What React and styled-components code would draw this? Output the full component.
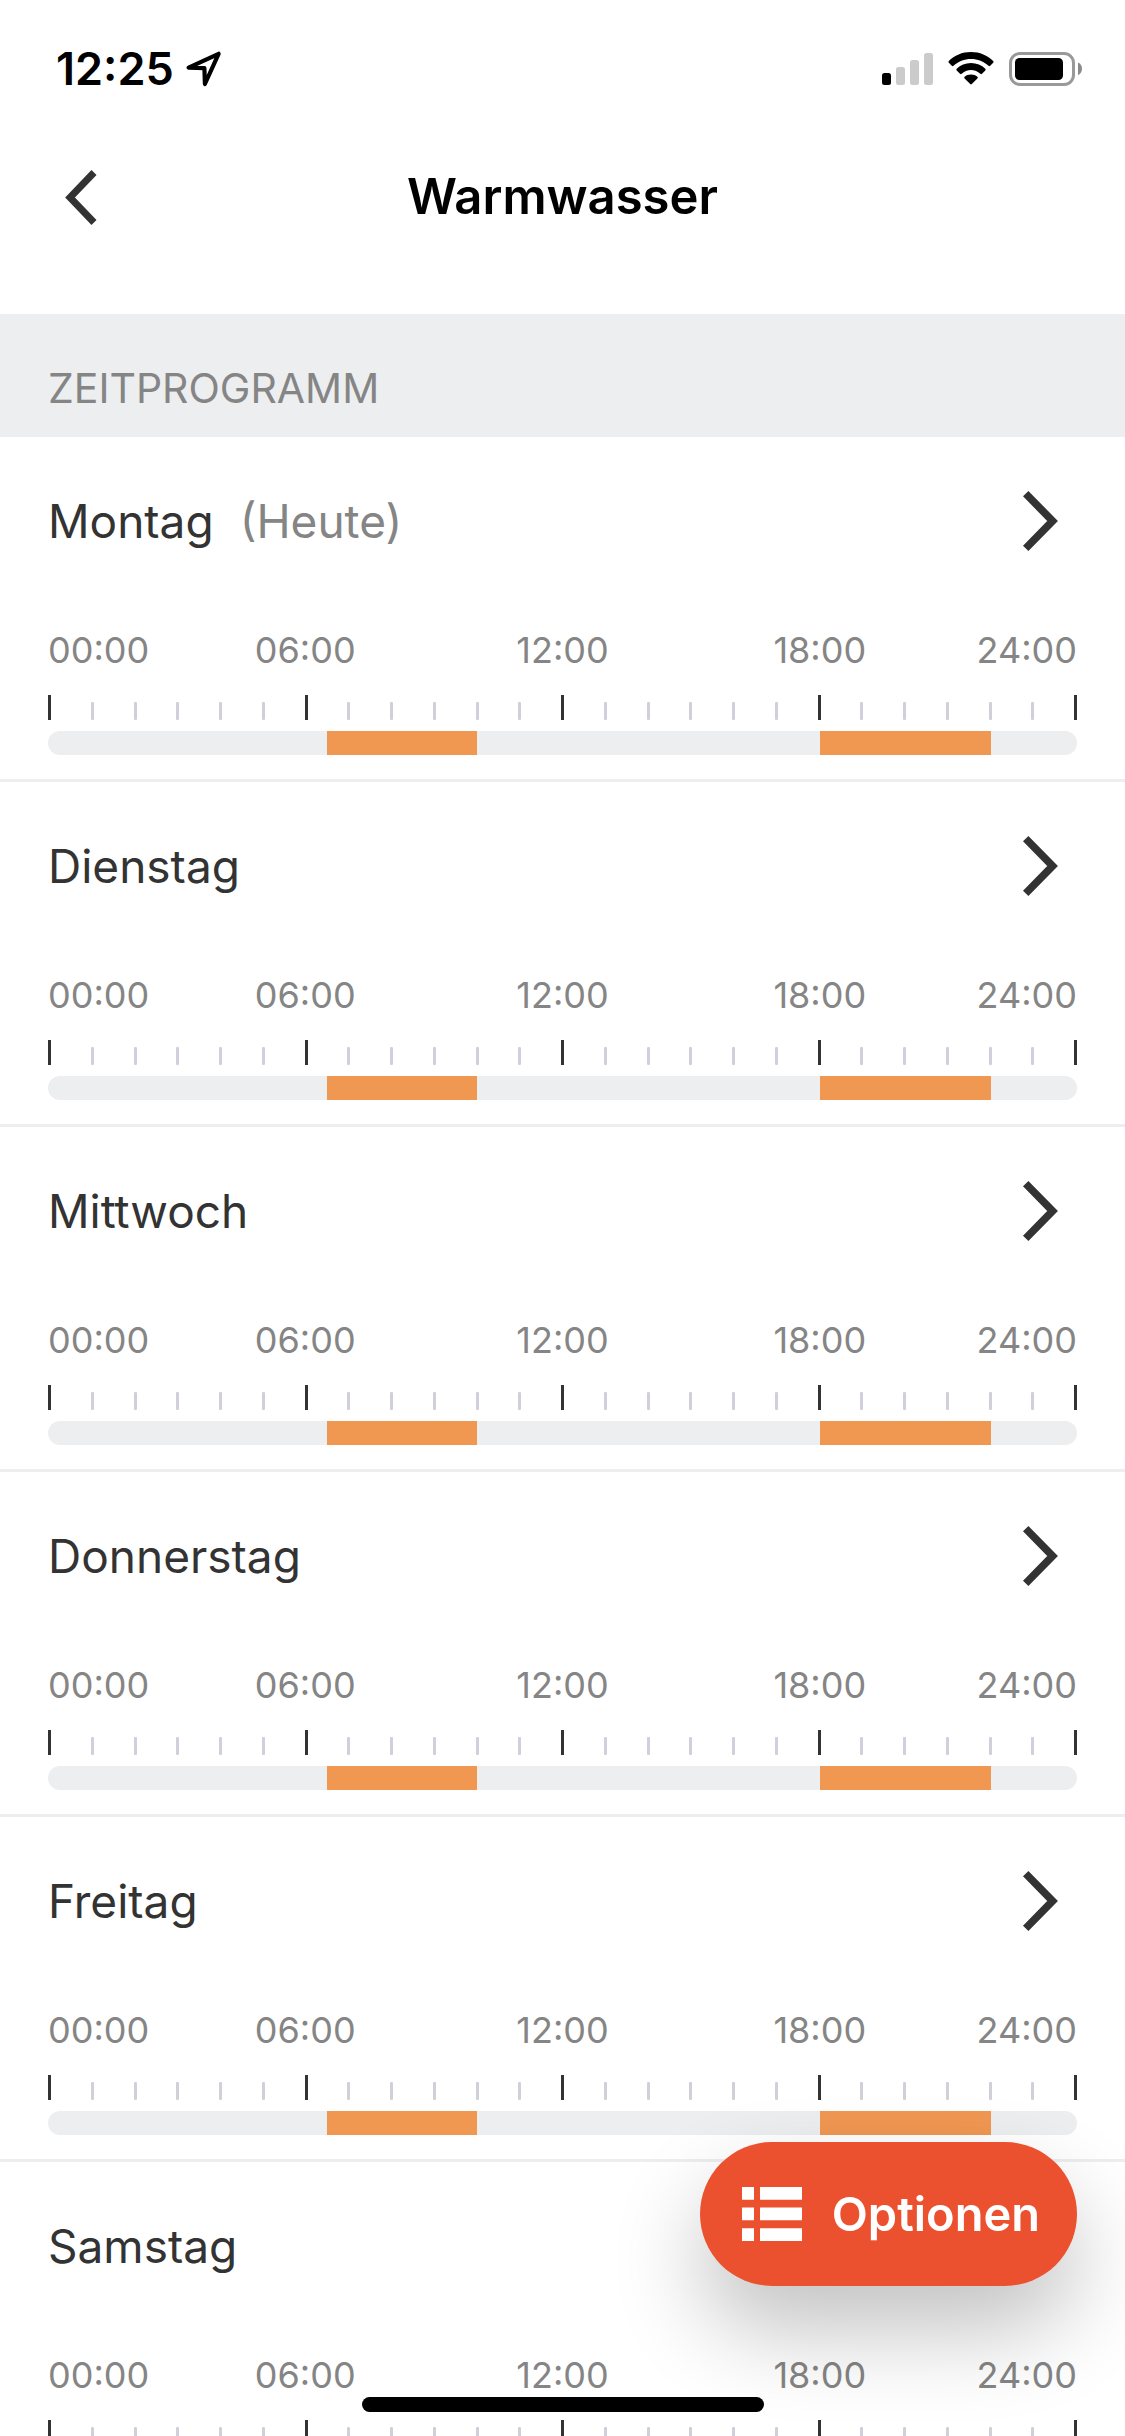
import React, { memo } from 'react';
import styled, { createGlobalStyle } from 'styled-components';

const GlobalStyle = createGlobalStyle`
    * {
        box-sizing: border-box;
    }

    body {
        margin: 0;
        background: #fff;
        color: #333;
        font-family: Inter, "Liberation Sans", sans-serif;
    }

    button {
        font-family: inherit;
        border: 0;
        cursor: pointer;
    }

    svg {
        display: block;
        flex: none;
    }
`;

const Screen = styled.div`
    height: 100vh;
    display: flex;
    flex-direction: column;
    overflow: hidden;
`;

const StatusBar = styled.div`
    flex: none;
    height: 132px;
    padding: 5px 43px 0 56px;
    display: flex;
    align-items: center;
    justify-content: space-between;
    color: #000;
`;

const StatusGroup = styled.div`
    display: flex;
    align-items: center;
    gap: ${(props) => props.$gap}px;
`;

const Clock = styled.span`
    font-size: 45px;
    font-weight: 600;
    line-height: 60px;
`;

const NavBar = styled.header`
    flex: none;
    height: 130px;
    margin-bottom: 52px;
    padding: 0 48px;
    display: grid;
    grid-template-columns: 96px 1fr 96px;
    align-items: center;
`;

const BackButton = styled.button`
    height: 96px;
    padding: 0 17px;
    background: none;
    display: flex;
    align-items: center;
`;

const Title = styled.h1`
    margin: 0;
    color: #000;
    font-size: 49px;
    font-weight: 600;
    line-height: 60px;
    text-align: center;
`;

const Content = styled.main`
    flex: 1;
    min-height: 0;
    overflow-y: auto;
    scrollbar-width: none;
`;

const SectionTitle = styled.h2`
    height: 123px;
    margin: 0;
    padding: 24px 48px 0;
    display: flex;
    align-items: center;
    background: #edeef0;
    color: #858585;
    font-size: 41px;
    font-weight: 400;
`;

const DayList = styled.ul`
    list-style: none;
    margin: 0;
    padding: 0;
`;

const DayItem = styled.li`
    padding-bottom: 24px;
    border-bottom: 3px solid #edeef0;
`;

const DayButton = styled.button`
    width: 100%;
    height: 168px;
    padding: 0 67px 0 48px;
    display: flex;
    align-items: center;
    gap: 26px;
    background: none;
    color: #333;
    font-size: 46px;
    line-height: 56px;

    svg {
        margin-left: auto;
    }
`;

const Today = styled.span`
    color: #858585;
`;

const Schedule = styled.div`
    padding: 0 48px;
`;

/* Randbeschriftungen sind halb so breit, so sitzt jede Uhrzeit mittig über ihrem Strich */
const Hours = styled.div`
    display: grid;
    grid-template-columns: 1fr 2fr 2fr 2fr 1fr;
    color: #858585;
    font-size: 36px;
    line-height: 90px;
    text-align: center;

    span:first-child {
        text-align: left;
    }

    span:last-child {
        text-align: right;
    }
`;

const Ticks = styled.div`
    height: 25px;
    margin-bottom: 11px;
    display: flex;
    align-items: flex-end;
    justify-content: space-between;
`;

const Tick = styled.span`
    width: 3px;
    height: ${(props) => (props.$major ? 25 : 18)}px;
    border-radius: ${(props) => (props.$major ? 0 : 1)}px;
    background: ${(props) => (props.$major ? '#333' : '#d1d0da')};
`;

const Bar = styled.div`
    height: 24px;
    display: flex;
    overflow: hidden;
    border-radius: 12px;
    background: #edeef0;
`;

const Segment = styled.span`
    flex: 0 0 auto;
    background: ${(props) => (props.$active ? '#f09752' : 'transparent')};
`;

const OptionsButton = styled.button`
    position: fixed;
    right: 48px;
    bottom: 150px;
    height: 144px;
    padding: 0 37px 0 42px;
    display: flex;
    align-items: center;
    gap: 30px;
    border-radius: 72px;
    background: #ec512f;
    box-shadow: 0 45px 90px rgba(0, 0, 0, 0.24);
    color: #fff;
    font-size: 47px;
    font-weight: 600;
    line-height: 56px;
`;

const HomeIndicator = styled.div`
    position: fixed;
    left: 50%;
    bottom: 24px;
    width: 402px;
    height: 15px;
    transform: translateX(-50%);
    border-radius: 8px;
    background: #000;
`;

const HOURS = ['00:00', '06:00', '12:00', '18:00', '24:00'];

const HEATING = [
    { from: 6.5, to: 10 },
    { from: 18, to: 22 },
];

const DAYS = [
    { name: 'Montag', today: true, slots: HEATING },
    { name: 'Dienstag', slots: HEATING },
    { name: 'Mittwoch', slots: HEATING },
    { name: 'Donnerstag', slots: HEATING },
    { name: 'Freitag', slots: HEATING },
    { name: 'Samstag', slots: HEATING },
];

// Zeitfenster in aufeinanderfolgende Abschnitte (Pause / aktiv) zerlegen
const toSegments = (slots) => {
    const segments = [];
    let hour = 0;
    slots.forEach(({ from, to }) => {
        segments.push({ hours: from - hour, active: false });
        segments.push({ hours: to - from, active: true });
        hour = to;
    });
    return segments;
};

const LocationIcon = () => (
    <svg width="36" height="36" viewBox="0 0 36 36" fill="none" stroke="currentColor" strokeWidth="4.2" strokeLinejoin="round">
        <path d="M2.6 16.6 L32.6 2.8 L18.9 33 L18.4 17.2 Z" />
    </svg>
);

const SignalIcon = () => (
    <svg width="51" height="34" viewBox="0 0 51 34" fill="#cbcbcb">
        <rect x="0" y="21" width="9" height="12" rx="2.5" fill="#000" />
        <rect x="14" y="15" width="9" height="18" rx="2.5" />
        <rect x="28" y="8" width="9" height="25" rx="2.5" />
        <rect x="42" y="1" width="9" height="32" rx="2.5" />
    </svg>
);

const WifiIcon = () => (
    <svg width="46" height="34" viewBox="0 0 46 34" fill="currentColor">
        <path d="M23 0 C31.8 0 39.6 3.4 45.2 9 Q46 9.9 45.2 10.8 L42.2 13.8 Q41.4 14.6 40.5 13.8 C35.8 9.5 29.7 7 23 7 C16.3 7 10.2 9.5 5.5 13.8 Q4.6 14.6 3.8 13.8 L0.8 10.8 Q0 9.9 0.8 9 C6.4 3.4 14.2 0 23 0 Z" />
        <path d="M23 11 C28.6 11 33.6 13.2 37.3 16.8 Q38.1 17.7 37.3 18.6 L34 21.8 Q33.2 22.6 32.3 21.8 C29.8 19.5 26.6 18.1 23 18.1 C19.4 18.1 16.2 19.5 13.7 21.8 Q12.8 22.6 12 21.8 L8.7 18.6 Q7.9 17.7 8.7 16.8 C12.4 13.2 17.4 11 23 11 Z" />
        <path d="M23 22.6 C25.6 22.6 27.7 23.4 29.4 24.8 Q30.3 25.6 29.4 26.5 L23.8 32 Q23 32.8 22.2 32 L16.6 26.5 Q15.7 25.6 16.6 24.8 C18.3 23.4 20.4 22.6 23 22.6 Z" />
    </svg>
);

const BatteryIcon = () => (
    <svg width="73" height="34" viewBox="0 0 73 34">
        <rect x="1.5" y="1.5" width="63" height="31" rx="9.5" fill="none" stroke="#999" strokeWidth="3" />
        <rect x="6" y="6" width="48" height="22" rx="4.5" fill="#000" />
        <path d="M69 10.5 C71.6 11.6 73 14 73 16.8 C73 19.6 71.6 22 69 23.2 Z" fill="#8a8a8a" />
    </svg>
);

const BackIcon = () => (
    <svg width="32" height="55" viewBox="0 0 32 55" fill="none" stroke="#333" strokeWidth="7">
        <path d="M29 2.5 L5 27.5 L29 52.5" />
    </svg>
);

const ChevronIcon = () => (
    <svg width="35" height="60" viewBox="0 0 35 60" fill="none" stroke="#333" strokeWidth="7.6">
        <path d="M2.7 2.7 L29.6 30 L2.7 57.3" />
    </svg>
);

const ListIcon = () => (
    <svg width="60" height="54" viewBox="0 0 60 54" fill="currentColor">
        {[0, 20.6, 41.2].map((y) => (
            <path key={y} d={`M0 ${y} h12 v12.7 h-12 Z M18 ${y} h42 v12.7 h-42 Z`} />
        ))}
    </svg>
);

const Day = memo(({ name, today, slots }) => (
    <DayItem>
        <DayButton type="button">
            <span>{name}</span>
            {today && <Today>(Heute)</Today>}
            <ChevronIcon />
        </DayButton>

        <Schedule>
            <Hours>
                {HOURS.map((hour) => (
                    <span key={hour}>{hour}</span>
                ))}
            </Hours>
            <Ticks>
                {Array.from({ length: 25 }, (_, i) => (
                    <Tick key={i} $major={i % 6 === 0} />
                ))}
            </Ticks>
            <Bar>
                {toSegments(slots).map(({ hours, active }, i) => (
                    <Segment key={i} $active={active} style={{ width: `${(hours / 24) * 100}%` }} />
                ))}
            </Bar>
        </Schedule>
    </DayItem>
));

const App = () => (
    <Screen>
        <GlobalStyle />

        <StatusBar>
            <StatusGroup $gap={12}>
                <Clock>12:25</Clock>
                <LocationIcon />
            </StatusGroup>
            <StatusGroup $gap={15}>
                <SignalIcon />
                <WifiIcon />
                <BatteryIcon />
            </StatusGroup>
        </StatusBar>

        <NavBar>
            <BackButton type="button" aria-label="Zurück">
                <BackIcon />
            </BackButton>
            <Title>Warmwasser</Title>
        </NavBar>

        <Content>
            <SectionTitle>ZEITPROGRAMM</SectionTitle>
            <DayList>
                {DAYS.map((day) => (
                    <Day key={day.name} {...day} />
                ))}
            </DayList>
        </Content>

        <OptionsButton type="button">
            <ListIcon />
            Optionen
        </OptionsButton>
        <HomeIndicator />
    </Screen>
);

export default App;
